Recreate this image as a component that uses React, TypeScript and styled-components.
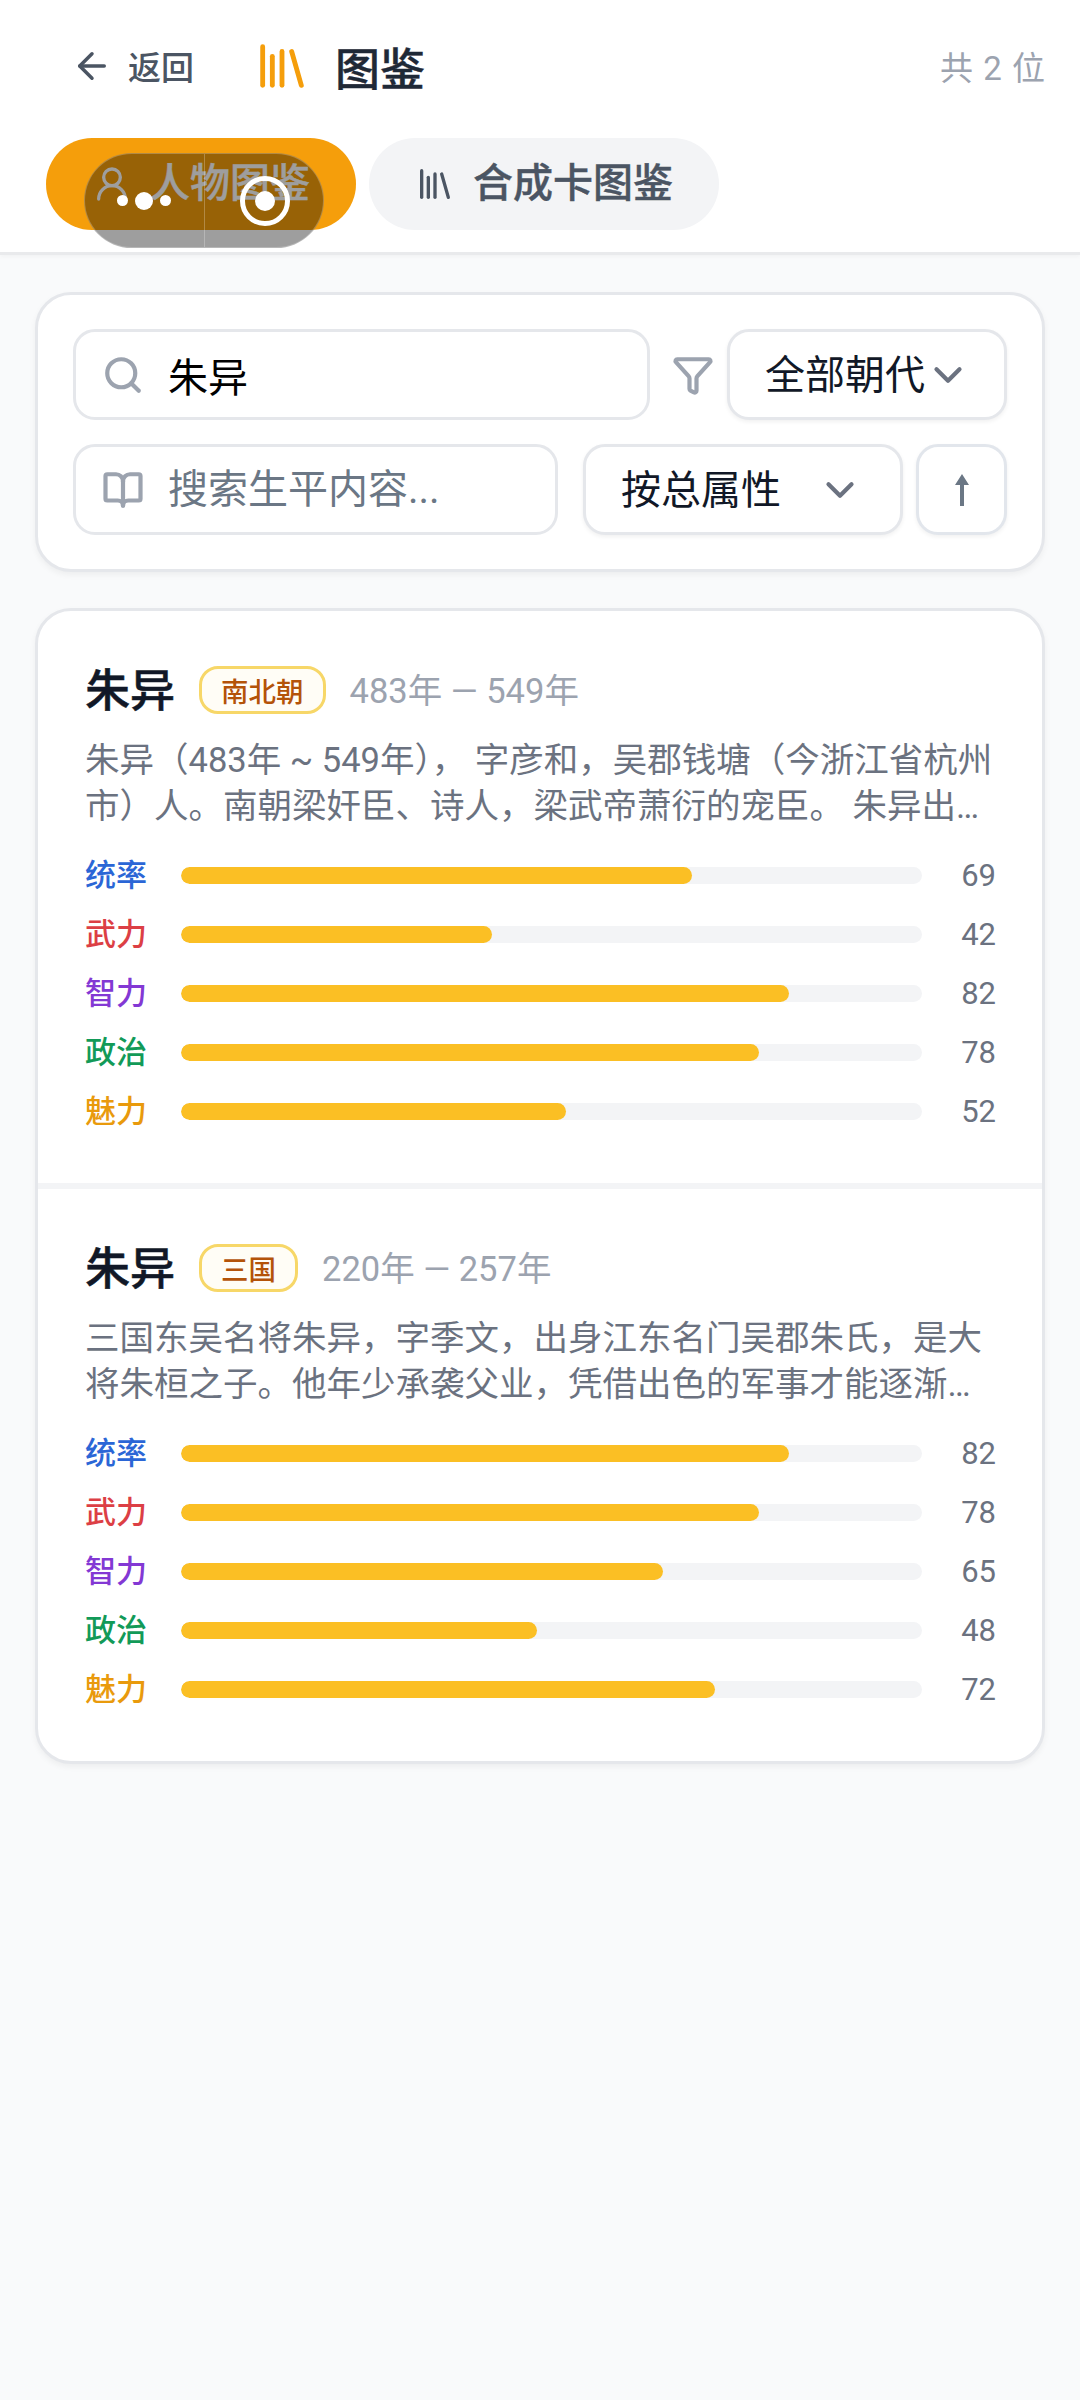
import React from 'react';
import styled, { createGlobalStyle } from 'styled-components';
import { ArrowLeft, BookOpen, ChevronDown, Filter, Library, Search, UserRound } from 'lucide-react';

const GlobalStyle = createGlobalStyle`
  html, body {
    margin: 0;
    padding: 0;
    background: #f9fafb;
    font-family: Roboto, "Noto Sans CJK SC", sans-serif;
  }
  * {
    box-sizing: border-box;
  }
`;

const Page = styled.div`
  position: relative;
  width: 1080px;
  min-height: 2400px;
  background: #f9fafb;
`;

const Header = styled.header`
  background: #fff;
  height: 255px;
  border-bottom: 3px solid #e9eaec;
  box-shadow: 0 2px 4px rgba(0, 0, 0, 0.03);
  padding: 0 34px 0 46px;
`;
const TopRow = styled.div`
  display: flex;
  align-items: center;
  height: 138px;
  padding-bottom: 6px;
`;
const BackLink = styled.div`
  display: flex;
  align-items: center;
  gap: 15px;
  margin-left: 25px;
  color: #4b5563;
  font-size: 33px;
  font-weight: 500;
`;
const TitleGroup = styled.div`
  display: flex;
  align-items: center;
  gap: 24px;
  margin-left: 59px;
  color: #1f2937;
  font-size: 45px;
  font-weight: 500;
  -webkit-text-stroke: 0.4px #1f2937;
`;
const Count = styled.div`
  margin-left: auto;
  color: #9ca3af;
  font-size: 33px;
  letter-spacing: 1px;
`;
const Tabs = styled.div`
  display: flex;
  gap: 13px;
`;
const Tab = styled.div<{ $active?: boolean }>`
  display: flex;
  align-items: center;
  gap: 18px;
  height: 92px;
  padding: 0 46px;
  border-radius: 46px;
  background: ${(p) => (p.$active ? '#f59e0b' : '#f3f4f6')};
  color: ${(p) => (p.$active ? '#fff' : '#4b5563')};
  font-size: 40px;
  font-weight: 500;
  -webkit-text-stroke: 0.4px currentColor;
`;
const TabText = styled.span`
  padding-bottom: 8px;
`;

const Capsule = styled.div`
  position: absolute;
  left: 84px;
  top: 153px;
  display: flex;
  width: 240px;
  height: 95px;
  border: 1px solid rgba(255, 255, 255, 0.25);
  border-radius: 48px;
  background: rgba(0, 0, 0, 0.38);
`;
const CapsuleCell = styled.div`
  flex: 1;
  display: flex;
  align-items: center;
  justify-content: center;
  gap: 7px;
  & + & {
    border-left: 1px solid rgba(255, 255, 255, 0.25);
  }
`;
const Dot = styled.span<{ $big?: boolean }>`
  width: ${(p) => (p.$big ? 18 : 11)}px;
  height: ${(p) => (p.$big ? 18 : 11)}px;
  border-radius: 50%;
  background: #fff;
`;
const Ring = styled.span`
  display: flex;
  align-items: center;
  justify-content: center;
  width: 50px;
  height: 50px;
  margin-left: 2px;
  border: 5px solid #fff;
  border-radius: 50%;
  &::after {
    content: '';
    width: 20px;
    height: 20px;
    border-radius: 50%;
    background: #fff;
  }
`;

const Main = styled.main`
  display: flex;
  flex-direction: column;
  gap: 36px;
  padding: 37px 35px 0;
`;
const Panel = styled.section`
  background: #fff;
  border: 3px solid #e5e7eb;
  border-radius: 36px;
  box-shadow: 0 3px 6px rgba(0, 0, 0, 0.05);
`;
const FilterPanel = styled(Panel)`
  display: flex;
  flex-direction: column;
  gap: 24px;
  padding: 34px 35px;
`;
const FilterRow = styled.div`
  display: flex;
  align-items: center;
`;
const InputBox = styled.label<{ $width: number }>`
  display: flex;
  align-items: center;
  gap: 24px;
  width: ${(p) => p.$width}px;
  height: 91px;
  padding: 0 26px;
  border: 3px solid #e5e7eb;
  border-radius: 22px;
  background: #fff;
  color: #9ca3af;
`;
const TextInput = styled.input`
  flex: 1;
  min-width: 0;
  padding: 0;
  border: 0;
  outline: 0;
  background: transparent;
  color: #000;
  font-family: inherit;
  font-size: 40px;
  &::placeholder {
    color: #6b7785;
    opacity: 1;
  }
`;
const FilterIcon = styled.div`
  display: flex;
  justify-content: center;
  width: 77px;
  padding-left: 8px;
  color: #9ca3af;
`;
const Select = styled.div<{ $width: number; $gap: number; $offset?: number }>`
  display: flex;
  align-items: center;
  gap: ${(p) => p.$gap}px;
  width: ${(p) => p.$width}px;
  height: 91px;
  margin-left: ${(p) => p.$offset ?? 0}px;
  padding-left: 35px;
  border: 3px solid #e5e7eb;
  border-radius: 22px;
  background: #fff;
  box-shadow: 0 2px 4px rgba(0, 0, 0, 0.06);
  color: #111827;
  font-size: 40px;
  svg {
    color: #6b7280;
  }
`;
const SelectText = styled.span`
  padding-bottom: 6px;
`;
const OrderButton = styled.div`
  display: flex;
  align-items: center;
  justify-content: center;
  width: 91px;
  height: 91px;
  margin-left: 13px;
  border: 3px solid #e2e6ec;
  border-radius: 22px;
  background: #fff;
  box-shadow: 0 2px 4px rgba(0, 0, 0, 0.06);
  color: #6b7785;
`;

const Person = styled.article`
  padding: 50px 46px 51px 47px;
  & + & {
    border-top: 6px solid #f3f4f6;
  }
`;
const NameRow = styled.div`
  display: flex;
  align-items: center;
  height: 58px;
`;
const Name = styled.h2`
  margin: 0;
  padding-bottom: 5px;
  color: #111827;
  font-size: 45px;
  font-weight: 500;
  -webkit-text-stroke: 0.5px #111827;
`;
const Dynasty = styled.span`
  display: flex;
  align-items: center;
  height: 48px;
  margin-left: 24px;
  padding: 0 19px;
  border: 3px solid #f7d768;
  border-radius: 19px;
  background: #fffdf6;
  color: #b45309;
  font-size: 27.5px;
  font-weight: 500;
`;
const Years = styled.span`
  margin-left: 24px;
  padding-bottom: 5px;
  color: #9ca3af;
  font-size: 34.5px;
`;
const Bio = styled.p`
  display: -webkit-box;
  -webkit-box-orient: vertical;
  -webkit-line-clamp: 2;
  overflow: hidden;
  margin: 18px 0 0;
  color: #6b7280;
  font-size: 34.5px;
  line-height: 46px;
`;
const Stats = styled.div`
  display: flex;
  flex-direction: column;
  gap: 17px;
  margin-top: 25px;
`;
const StatRow = styled.div`
  display: flex;
  align-items: center;
  height: 42px;
`;
const StatLabel = styled.span<{ $color: string }>`
  width: 96px;
  padding-bottom: 6px;
  color: ${(p) => p.$color};
  font-size: 31px;
  font-weight: 500;
`;
const Track = styled.div`
  flex: 1;
  height: 17px;
  border-radius: 9px;
  background: #f3f4f6;
  overflow: hidden;
`;
const Fill = styled.div<{ $value: number }>`
  width: ${(p) => p.$value}%;
  height: 100%;
  border-radius: 9px;
  background: #fbbf24;
`;
const StatValue = styled.span`
  width: 74px;
  color: #6b7280;
  font-size: 31px;
  text-align: right;
`;

const statNames = [
  { label: '统率', color: '#2b66d6' },
  { label: '武力', color: '#dc3f45' },
  { label: '智力', color: '#8338d4' },
  { label: '政治', color: '#129a58' },
  { label: '魅力', color: '#e99a0c' },
];

const people = [
  {
    name: '朱异',
    dynasty: '南北朝',
    years: '483年 — 549年',
    bio: '朱异（483年 ~ 549年）， 字彦和，吴郡钱塘（今浙江省杭州市）人。南朝梁奸臣、诗人，梁武帝萧衍的宠臣。 朱异出身于官宦世家，自幼博览群书，深得梁武帝信任，执掌机要三十余年。',
    stats: [69, 42, 82, 78, 52],
  },
  {
    name: '朱异',
    dynasty: '三国',
    years: '220年 — 257年',
    bio: '三国东吴名将朱异，字季文，出身江东名门吴郡朱氏，是大将朱桓之子。他年少承袭父业，凭借出色的军事才能逐渐成为东吴后期的重要将领，屡立战功。',
    stats: [82, 78, 65, 48, 72],
  },
];

export default function App() {
  return (
    <Page>
      <GlobalStyle />
      <Header>
        <TopRow>
          <BackLink>
            <ArrowLeft size={42} strokeWidth={2} />
            返回
          </BackLink>
          <TitleGroup>
            <Library size={58} color="#f59e0b" strokeWidth={2} />
            图鉴
          </TitleGroup>
          <Count>共 2 位</Count>
        </TopRow>
        <Tabs>
          <Tab $active>
            <UserRound size={40} strokeWidth={2} />
            <TabText>人物图鉴</TabText>
          </Tab>
          <Tab>
            <Library size={40} strokeWidth={2} />
            <TabText>合成卡图鉴</TabText>
          </Tab>
        </Tabs>
      </Header>

      <Capsule>
        <CapsuleCell>
          <Dot />
          <Dot $big />
          <Dot />
        </CapsuleCell>
        <CapsuleCell>
          <Ring />
        </CapsuleCell>
      </Capsule>

      <Main>
        <FilterPanel>
          <FilterRow>
            <InputBox $width={577}>
              <Search size={42} strokeWidth={2.4} />
              <TextInput readOnly value="朱异" />
            </InputBox>
            <FilterIcon>
              <Filter size={42} strokeWidth={2.4} />
            </FilterIcon>
            <Select $width={280} $gap={0}>
              <SelectText>全部朝代</SelectText>
              <ChevronDown size={46} strokeWidth={2.2} />
            </Select>
          </FilterRow>
          <FilterRow>
            <InputBox $width={485}>
              <BookOpen size={42} strokeWidth={2.4} />
              <TextInput readOnly placeholder="搜索生平内容..." />
            </InputBox>
            <Select $width={320} $gap={36} $offset={25}>
              <SelectText>按总属性</SelectText>
              <ChevronDown size={46} strokeWidth={2.2} />
            </Select>
            <OrderButton>
              <svg width="16" height="32" viewBox="0 0 16 32" fill="currentColor">
                <path d="M8 0 15 11H10V32H6V11H1Z" />
              </svg>
            </OrderButton>
          </FilterRow>
        </FilterPanel>

        <Panel>
          {people.map((person) => (
            <Person key={person.dynasty}>
              <NameRow>
                <Name>{person.name}</Name>
                <Dynasty>{person.dynasty}</Dynasty>
                <Years>{person.years}</Years>
              </NameRow>
              <Bio>{person.bio}</Bio>
              <Stats>
                {statNames.map((stat, i) => (
                  <StatRow key={stat.label}>
                    <StatLabel $color={stat.color}>{stat.label}</StatLabel>
                    <Track>
                      <Fill $value={person.stats[i]} />
                    </Track>
                    <StatValue>{person.stats[i]}</StatValue>
                  </StatRow>
                ))}
              </Stats>
            </Person>
          ))}
        </Panel>
      </Main>
    </Page>
  );
}
